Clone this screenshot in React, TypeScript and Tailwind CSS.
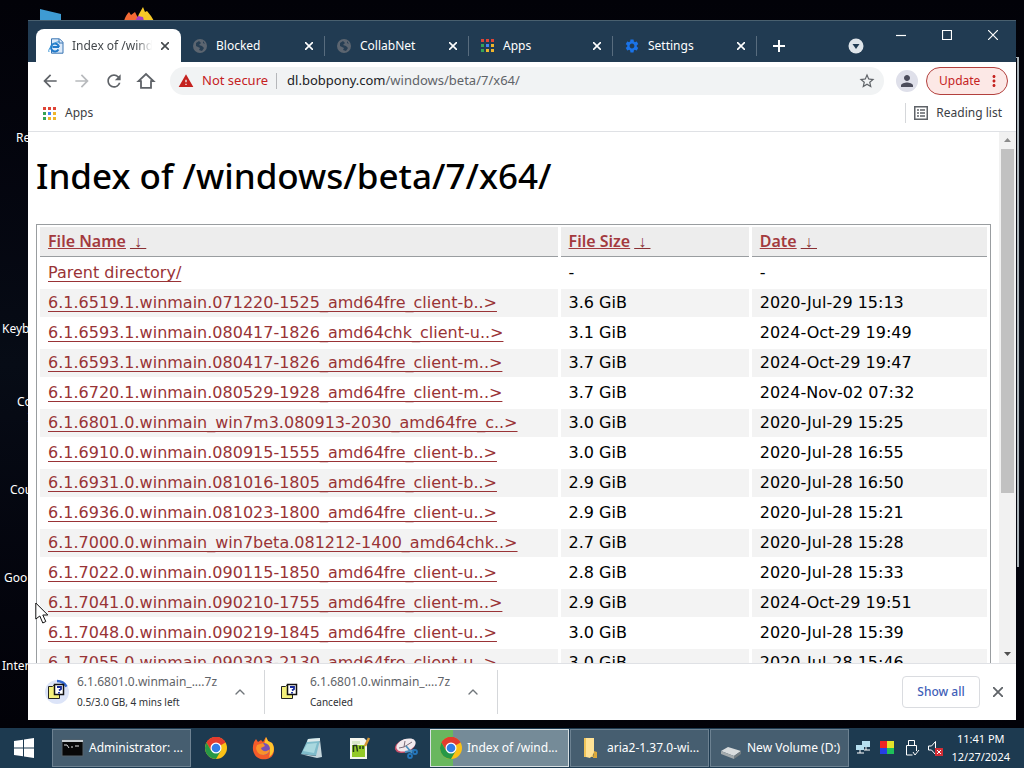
import { ChevronUp } from "lucide-react";
import { MdArrowBack, MdArrowForward, MdMoreVert, MdPerson, MdRefresh, MdSettings, MdStarBorder, MdWarning } from "react-icons/md";
import type { ReactNode } from "react";

const files = [
  ["6.1.6519.1.winmain.071220-1525_amd64fre_client-b..>", "3.6 GiB", "2020-Jul-29 15:13"],
  ["6.1.6593.1.winmain.080417-1826_amd64chk_client-u..>", "3.1 GiB", "2024-Oct-29 19:49"],
  ["6.1.6593.1.winmain.080417-1826_amd64fre_client-m..>", "3.7 GiB", "2024-Oct-29 19:47"],
  ["6.1.6720.1.winmain.080529-1928_amd64fre_client-m..>", "3.7 GiB", "2024-Nov-02 07:32"],
  ["6.1.6801.0.winmain_win7m3.080913-2030_amd64fre_c..>", "3.0 GiB", "2020-Jul-29 15:25"],
  ["6.1.6910.0.winmain.080915-1555_amd64fre_client-b..>", "3.0 GiB", "2020-Jul-28 16:55"],
  ["6.1.6931.0.winmain.081016-1805_amd64fre_client-b..>", "2.9 GiB", "2020-Jul-28 16:50"],
  ["6.1.6936.0.winmain.081023-1800_amd64fre_client-u..>", "2.9 GiB", "2020-Jul-28 15:21"],
  ["6.1.7000.0.winmain_win7beta.081212-1400_amd64chk..>", "2.7 GiB", "2020-Jul-28 15:28"],
  ["6.1.7022.0.winmain.090115-1850_amd64fre_client-u..>", "2.8 GiB", "2020-Jul-28 15:33"],
  ["6.1.7041.0.winmain.090210-1755_amd64fre_client-m..>", "2.9 GiB", "2024-Oct-29 19:51"],
  ["6.1.7048.0.winmain.090219-1845_amd64fre_client-u..>", "3.0 GiB", "2020-Jul-28 15:39"],
  ["6.1.7055.0.winmain.090303-2130_amd64fre_client-u..>", "3.0 GiB", "2020-Jul-28 15:46"]
];

const tabs = [
  { label: "Blocked", icon: <GlobeIcon /> },
  { label: "CollabNet", icon: <GlobeIcon /> },
  { label: "Apps", icon: <AppsGrid /> },
  { label: "Settings", icon: <MdSettings size={16} className="text-[#1a73e8]" /> }
];

export default function App() {
  return (
    <div className="flex h-screen flex-col overflow-hidden bg-[#020208] font-['Noto_Sans','Open_Sans',sans-serif] text-[12px]">
      <main className="relative min-h-0 flex-1 bg-linear-to-b from-[#020208] via-[#070c16] to-[#020208]">
        <DesktopIcons />
        <div className="absolute top-[57px] right-[5px] h-[510px] w-3 border-t border-r-2 border-[#aab3b8]" />
        <BrowserWindow />
        <Cursor />
      </main>
      <Taskbar />
    </div>
  );
}

function DesktopIcons() {
  return (
    <div className="leading-4 text-white">
      <svg className="absolute top-2 left-10" width="22" height="14" viewBox="0 0 22 14" aria-hidden="true">
        <path d="M0 1l21 5v8H0z" fill="#3e9bd3" />
      </svg>
      <svg className="absolute top-[6px] left-[124px]" width="30" height="15" viewBox="0 0 30 15" aria-hidden="true">
        <path d="M0 15C1 11 3 8 5 6l2 3 4-3 2 4 3 5z" fill="#f36a35" />
        <path d="M12 15l3-7 4-7 2 5 2-1 4 5 3 5z" fill="#f7c928" />
        <path d="M11 15l3-5 5 1 1 4z" fill="#a43fc4" />
      </svg>
      <span className="absolute top-[130px] left-4">Re</span>
      <span className="absolute top-[321px] left-[2px]">Keyb</span>
      <span className="absolute top-[394px] left-[17px] text-right">
        Co
        <br />I
      </span>
      <span className="absolute top-[482px] left-[10px]">Cou</span>
      <span className="absolute top-[570px] left-1">Goo</span>
      <span className="absolute top-[658px] left-[2px]">Inter</span>
    </div>
  );
}

function BrowserWindow() {
  return (
    <section className="absolute top-5 right-2 bottom-2 left-7 flex flex-col border-t border-[#49606f] bg-white">
      <TabStrip />
      <Toolbar />
      <div className="flex h-8 shrink-0 items-start border-b border-[#dfe1e5] px-[14px] pt-[3px] text-[#3c4043]">
        <a href="#apps" className="flex h-5 items-center gap-2">
          <AppsGrid />
          Apps
        </a>
        <button type="button" className="ml-auto flex h-5 items-center gap-2 border-l border-[#d5d7da] pl-2">
          <ReadingListIcon />
          Reading list
        </button>
      </div>
      <div className="flex min-h-0 flex-1">
        <DirectoryPage />
        <Scrollbar />
      </div>
      <DownloadShelf />
    </section>
  );
}

function TabStrip() {
  return (
    <header className="flex h-[41px] shrink-0 bg-[#213b52] text-white">
      <div className="flex min-w-0 flex-1 pt-2 pl-2">
        <div className="flex h-[33px] w-[145px] shrink-0 items-center rounded-t-lg bg-white pr-2 pl-3 text-[#45494d]">
          <PageIcon />
          <span className="ml-2 w-20 overflow-hidden mask-r-from-80% whitespace-nowrap">Index of /wind</span>
          <CloseButton label="Close Index of /windows" />
        </div>
        {tabs.map((tab) => (
          <div key={tab.label} className="flex h-[33px] w-36 items-center">
            <div className="flex h-5 w-full items-center border-r border-[#586c7e] pr-[7px] pl-[11px]">
              {tab.icon}
              <span className="ml-2">{tab.label}</span>
              <CloseButton label={`Close ${tab.label}`} />
            </div>
          </div>
        ))}
        <button type="button" aria-label="New tab" className="ml-3 grid h-[33px] w-5 place-items-center">
          <svg width="12" height="12" viewBox="0 0 12 12" stroke="currentColor" strokeWidth="2" aria-hidden="true">
            <path d="M6 0v12M0 6h12" />
          </svg>
        </button>
      </div>
      <button type="button" aria-label="Search tabs" className="mt-[17px] mr-[14px] h-4 w-4">
        <svg width="16" height="16" viewBox="0 0 16 16" aria-hidden="true">
          <circle cx="8" cy="8" r="7.500" fill="#dfe5ea" />
          <path d="M4.500 6h7L8 11z" fill="#213b52" />
        </svg>
      </button>
      <WindowButton label="Minimize">
        <path d="M0 5.500h10" />
      </WindowButton>
      <WindowButton label="Maximize">
        <path d="M.5.500h9v9h-9z" />
      </WindowButton>
      <WindowButton label="Close">
        <path d="M0 0l10 10M10 0L0 10" />
      </WindowButton>
    </header>
  );
}

function WindowButton({ label, children }: { label: string; children: ReactNode }) {
  return (
    <button type="button" aria-label={label} className="grid h-7 w-[46px] shrink-0 place-items-center">
      <svg width="10" height="10" viewBox="0 0 10 10" fill="none" stroke="white" strokeWidth="1.200" aria-hidden="true">
        {children}
      </svg>
    </button>
  );
}

function CloseButton({ label }: { label: string }) {
  return (
    <button type="button" aria-label={label} className="ml-auto grid h-4 w-4 shrink-0 place-items-center">
      <svg width="8" height="8" viewBox="0 0 8 8" stroke="currentColor" strokeWidth="1.600" aria-hidden="true">
        <path d="M0 0l8 8M8 0L0 8" />
      </svg>
    </button>
  );
}

function Toolbar() {
  return (
    <div className="flex h-[38px] shrink-0 items-center pr-2 pl-3 text-[#5f6368]">
      <nav className="flex gap-3">
        <button type="button" aria-label="Back">
          <MdArrowBack size={20} />
        </button>
        <button type="button" aria-label="Forward" className="text-[#b8babd]">
          <MdArrowForward size={20} />
        </button>
        <button type="button" aria-label="Reload">
          <MdRefresh size={20} />
        </button>
        <button type="button" aria-label="Home">
          <svg width="20" height="20" viewBox="0 0 20 20" fill="none" stroke="currentColor" strokeWidth="1.800" aria-hidden="true">
            <path d="M2.500 10.200L10 3l7.500 7.200H15v6.600H5v-6.600z" />
          </svg>
        </button>
      </nav>
      <div className="ml-[14px] flex h-7 min-w-0 flex-1 items-center rounded-full bg-[#f1f3f4] px-2 text-[13px]">
        <MdWarning size={16} className="shrink-0 text-[#c5221f]" />
        <span className="ml-2 shrink-0 text-[#c5221f]">Not secure</span>
        <span className="mr-[10px] ml-2 h-4 w-px bg-[#b5b7ba]" />
        <span className="min-w-0 flex-1 truncate">
          <span className="text-[#202124]">dl.bobpony.com</span>/windows/beta/7/x64/
        </span>
        <button type="button" aria-label="Bookmark this page">
          <MdStarBorder size={18} />
        </button>
      </div>
      <button type="button" aria-label="Profile" className="ml-3 grid h-[22px] w-[22px] place-items-center rounded-full bg-[#dfe0ea]">
        <MdPerson size={18} className="text-[#4c4d5c]" />
      </button>
      <button type="button" className="ml-2 flex h-7 w-[82px] items-center justify-between rounded-full border border-[#b3403d] bg-[#fce8e6] pr-1 pl-3 text-[#c5221f]">
        Update
        <MdMoreVert size={18} />
      </button>
    </div>
  );
}

function DirectoryPage() {
  return (
    <div className="min-w-0 flex-1 overflow-hidden px-2 text-black">
      <h1 className="mt-5 mb-6 text-[35px] leading-[48px] font-medium whitespace-nowrap">Index of /windows/beta/7/x64/</h1>
      <table className="w-full table-fixed border-separate border-spacing-x-[3px] border-spacing-y-[2px] border border-[#999da0] text-left text-[16px] leading-7">
        <thead>
          <tr>
            <HeaderCell width="w-[55%]">File Name</HeaderCell>
            <HeaderCell width="w-[20%]">File Size</HeaderCell>
            <HeaderCell width="w-[25%]">Date</HeaderCell>
          </tr>
        </thead>
        <tbody className="font-['DejaVu_Sans',sans-serif]">
          <FileRow name="Parent directory/" size="-" date="-" />
          {files.map(([name, size, date]) => (
            <FileRow key={name} name={name} size={size} date={date} />
          ))}
        </tbody>
      </table>
    </div>
  );
}

function HeaderCell({ width, children }: { width: string; children: ReactNode }) {
  return (
    <th className={`${width} border-b border-[#999da0] bg-[#ededed] px-2 pt-0 pb-px font-semibold`}>
      <a href="#sort" className="text-[#a33a3e] underline">
        {children}
      </a>
      <a href="#descending" className="ml-1 font-normal text-[#8a3034] underline">
        &nbsp;↓&nbsp;
      </a>
    </th>
  );
}

function FileRow({ name, size, date }: { name: string; size: string; date: string }) {
  return (
    <tr className="[&:nth-child(even)>td]:bg-[#f3f3f3]">
      <td className="px-2 py-0 whitespace-nowrap">
        <a href="#file" className="text-[#993336] underline underline-offset-3 [text-decoration-skip-ink:none]">
          {name}
        </a>
      </td>
      <td className="px-2 py-0">{size}</td>
      <td className="px-2 py-0 whitespace-nowrap">{date}</td>
    </tr>
  );
}

function Scrollbar() {
  return (
    <div className="flex w-[17px] shrink-0 flex-col items-center bg-[#f1f1f1]">
      <svg width="17" height="17" viewBox="0 0 17 17" aria-hidden="true">
        <path d="M5 10l3.500-4L12 10z" fill="#8a8a8a" />
      </svg>
      <div className="h-[344px] w-[13px] bg-[#c1c1c1]" />
      <svg className="mt-auto" width="17" height="17" viewBox="0 0 17 17" aria-hidden="true">
        <path d="M5 6l3.500 4L12 6z" fill="#505050" />
      </svg>
    </div>
  );
}

function DownloadShelf() {
  return (
    <footer className="flex h-[57px] shrink-0 items-center border-t border-[#dfe1e5] pr-[10px]">
      <Download status="0.5/3.0 GB, 4 mins left" active />
      <Download status="Canceled" />
      <button type="button" className="ml-auto h-8 w-[78px] rounded border border-[#dadce0] font-medium text-[#3f61b8]">
        Show all
      </button>
      <button type="button" aria-label="Close downloads bar" className="ml-[10px] grid h-4 w-4 place-items-center text-[#5f6368]">
        <svg width="10" height="10" viewBox="0 0 10 10" stroke="currentColor" strokeWidth="1.800" aria-hidden="true">
          <path d="M0 0l10 10M10 0L0 10" />
        </svg>
      </button>
    </footer>
  );
}

function Download({ status, active = false }: { status: string; active?: boolean }) {
  return (
    <div className={`flex h-11 shrink-0 items-center border-r border-[#d5d7da] pr-4 ${active ? "w-[237px] pl-4" : "w-[233px] pl-3"}`}>
      <svg width="26" height="26" viewBox="0 0 26 26" aria-hidden="true">
        {active ? (
          <>
            <circle cx="13" cy="13" r="12" fill="#dce4f8" />
            <path d="M13 2a11 11 0 0 1 9.500 5.500" fill="none" stroke="#3468cf" strokeWidth="2.500" />
          </>
        ) : null}
        <path d="M4.500 7.500h4l1-1h6v13h-11z" fill="#f4f07c" stroke="#222" />
        <path d="M10.500 5.500h9v10h-9z" fill="#fff" stroke="#111" strokeWidth="1.500" />
        <path d="M13 8h4v2l-2 1.500M15 13v1.500" fill="none" stroke="#172b9a" strokeWidth="1.800" />
      </svg>
      <div className="ml-[7px] min-w-0 flex-1 whitespace-nowrap">
        <p className="leading-5 text-[#5f6368]">6.1.6801.0.winmain_....7z</p>
        <p className="text-[10px] leading-5 text-[#303236]">{status}</p>
      </div>
      <button type="button" aria-label="Download options" className="text-[#70757a]">
        <ChevronUp size={16} />
      </button>
    </div>
  );
}

function Taskbar() {
  return (
    <footer className="flex h-10 shrink-0 items-stretch bg-[#1d3a50] text-white">
      <button type="button" aria-label="Start" className="grid w-[52px] shrink-0 place-items-center pr-1">
        <svg width="20" height="20" viewBox="0 0 20 20" fill="white" aria-hidden="true">
          <path d="M0 3l9-1.300v7.800H0zM10 1.500L20 0v9.500H10zM0 10.500h9v7.800L0 17zM10 10.500h10V20l-10-1.500z" />
        </svg>
      </button>
      <TaskButton label="Administrator: ..." icon={<TerminalIcon />} />
      <div className="flex w-[238px] shrink-0 items-center justify-between px-3">
        <button type="button" aria-label="Chrome"><ChromeIcon /></button>
        <button type="button" aria-label="Firefox"><FirefoxIcon /></button>
        <button type="button" aria-label="Notepad"><NotepadIcon /></button>
        <button type="button" aria-label="Notepad++"><NotepadPlusIcon /></button>
        <button type="button" aria-label="Snipping Tool"><SnipIcon /></button>
      </div>
      <TaskButton label="Index of /wind..." icon={<ChromeIcon />} active />
      <TaskButton label="aria2-1.37.0-wi..." icon={<FolderIcon />} />
      <TaskButton label="New Volume (D:)" icon={<DriveIcon />} />
      <div className="ml-auto flex shrink-0 items-center gap-2 pr-[14px]">
        <TrayIcons />
        <time className="text-center text-[11px] leading-[18px]">
          11:41 PM
          <br />
          12/27/2024
        </time>
      </div>
    </footer>
  );
}

function TaskButton({ label, icon, active = false }: { label: string; icon: ReactNode; active?: boolean }) {
  return (
    <button
      type="button"
      className={`mr-px flex h-[38px] w-[139px] shrink-0 items-center gap-1 self-center border px-2 whitespace-nowrap ${
        active
          ? "border-[#d7dfe2] bg-linear-to-r from-[#69b75e] from-16% to-[#758b98] to-16%"
          : "border-[#6d8292] bg-[#465e70]"
      }`}
    >
      {icon}
      {label}
    </button>
  );
}

function AppsGrid() {
  return (
    <svg width="15" height="15" viewBox="0 0 15 15" aria-hidden="true">
      <path d="M1 1h3v3H1zM6 1h3v3H6zM11 1h3v3h-3z" fill="#df4436" />
      <path d="M1 6h3v3H1z" fill="#35a355" />
      <path d="M6 6h3v3H6z" fill="#4285f4" />
      <path d="M11 6h3v3h-3zM6 11h3v3H6zM11 11h3v3h-3z" fill="#efb52b" />
      <path d="M1 11h3v3H1z" fill="#35a355" />
    </svg>
  );
}

function GlobeIcon() {
  return (
    <svg width="16" height="16" viewBox="0 0 16 16" aria-hidden="true">
      <circle cx="8" cy="8" r="7" fill="#5c6570" />
      <path d="M4 5l3-2 2 2-2 2 3 1 2 2-2 3-3-1 1-2-4-2zM11 3l2 3-2-1z" fill="#273e53" />
    </svg>
  );
}

function PageIcon() {
  return (
    <svg width="16" height="16" viewBox="0 0 16 16" fill="none" aria-hidden="true">
      <path d="M3.500.800h8l3.500 3.500v10.900H3.500z" fill="#dceafa" stroke="#3975b3" />
      <path d="M11 1v4h4" stroke="#3975b3" />
      <path d="M11 9H4.500M10.500 11.500A4 4 0 1 1 11 9" stroke="#2179c8" strokeWidth="2" />
      <path d="M1 14C-1 11 8 2 12 4" stroke="#3693d5" />
    </svg>
  );
}

function ReadingListIcon() {
  return (
    <svg width="14" height="14" viewBox="0 0 14 14" fill="none" stroke="#5f6368" strokeWidth="1.500" aria-hidden="true">
      <path d="M.75.750h12.500v12.500H.75zM3 4h2M6 4h5M3 7h2M6 7h5M3 10h2M6 10h5" />
    </svg>
  );
}

function TerminalIcon() {
  return (
    <svg className="shrink-0" width="24" height="20" viewBox="0 0 24 20" aria-hidden="true">
      <path d="M1 2h21v16H1z" fill="#080808" stroke="#56636b" />
      <path d="M1 2h21v2H1z" fill="#c9ced1" />
      <path d="M3 7h3l2 3M10 9h2M14 8h4" fill="none" stroke="#dedede" />
    </svg>
  );
}

function ChromeIcon() {
  return (
    <svg className="shrink-0" width="24" height="24" viewBox="0 0 24 24" aria-hidden="true">
      <circle cx="12" cy="12" r="11" fill="#fbc116" />
      <path d="M12 12L2.500 6.500A11 11 0 0 1 21.500 6.500z" fill="#e33b2e" />
      <path d="M12 6.500h9.500A11 11 0 0 0 2.500 6.500L7.200 14.700z" fill="#e33b2e" />
      <path d="M2.500 6.500A11 11 0 0 0 12 23l4.800-8.300H7.200z" fill="#279847" />
      <circle cx="12" cy="12" r="5.500" fill="white" />
      <circle cx="12" cy="12" r="4.300" fill="#337de6" />
    </svg>
  );
}

function FirefoxIcon() {
  return (
    <svg width="24" height="24" viewBox="0 0 24 24" aria-hidden="true">
      <path d="M2 6l2-3 2 3 3-2 2 2 3-5 2 4 4 2c4 6 2 15-5 16C5 25-2 17 2 6z" fill="#f45b2a" />
      <path d="M14 1l2 4 4 2c4 6 1 12-3 14 3-7-2-9-5-12z" fill="#ffc52d" />
      <circle cx="12" cy="13" r="6" fill="#7750b7" />
      <path d="M5 9l6-2 2 3-4 2c1 4 6 4 9 1-1 8-13 8-14-1z" fill="#f9922b" />
    </svg>
  );
}

function NotepadIcon() {
  return (
    <svg width="24" height="24" viewBox="0 0 24 24" aria-hidden="true">
      <path d="M9 3l12-1-2 18-17-2z" fill="#7fbccb" />
      <path d="M9 3l12-1v3L8 6z" fill="#dce9ea" />
      <path d="M8 8l10-1-3 10-11-2z" fill="#a9d8df" />
      <path d="M1 18l16 2 4-16 2 17-5 1z" fill="#c5d6dc" />
    </svg>
  );
}

function NotepadPlusIcon() {
  return (
    <svg width="24" height="24" viewBox="0 0 24 24" aria-hidden="true">
      <path d="M3 2h14l3 3v18H3z" fill="#f5f6ee" />
      <path d="M5 9h13v12H5z" fill="#93ca28" />
      <path d="M5 5h8v3H5z" fill="#d7e7c7" />
      <path d="M6.500 9v7M6.500 9.500h3l1 6M13 10v3M16 10v3" fill="none" stroke="#22361b" strokeWidth="1.500" />
      <path d="M22 2l-4 8" stroke="#d59734" strokeWidth="2.500" />
    </svg>
  );
}

function SnipIcon() {
  return (
    <svg width="24" height="24" viewBox="0 0 24 24" aria-hidden="true">
      <ellipse cx="11" cy="10" rx="10.500" ry="6.500" fill="#c9506a" transform="rotate(-20 11 10)" />
      <ellipse cx="12" cy="9" rx="10" ry="6" fill="#f1e9ed" transform="rotate(-20 12 9)" />
      <path d="M5 12l5-1 8-5M10 11l1-6" fill="none" stroke="#7c6c79" />
      <path d="M12 10l6 7M11 16l10-2" stroke="#4c91c2" strokeWidth="1.800" />
      <circle cx="16" cy="20" r="2" fill="none" stroke="#2475ba" strokeWidth="1.800" />
      <circle cx="21" cy="16" r="2" fill="none" stroke="#2475ba" strokeWidth="1.800" />
    </svg>
  );
}

function FolderIcon() {
  return (
    <svg className="shrink-0" width="24" height="24" viewBox="0 0 24 24" aria-hidden="true">
      <path d="M5 2h9v19H5z" fill="#efc45b" />
      <path d="M7 2h8v15l-4 5-4-1z" fill="#ffe296" />
      <path d="M15 15l3 1v6h-4z" fill="#dca83a" />
    </svg>
  );
}

function DriveIcon() {
  return (
    <svg className="shrink-0" width="24" height="24" viewBox="0 0 24 24" aria-hidden="true">
      <path d="M2 15l7-4 13 4-7 5z" fill="#d8dcdd" />
      <path d="M2 15v3l13 5v-3z" fill="#a4aaac" />
      <path d="M15 20l7-5v3l-7 5z" fill="#737d82" />
    </svg>
  );
}

function TrayIcons() {
  return (
    <svg width="88" height="18" viewBox="0 0 88 18" fill="none" aria-label="System tray" role="img">
      <path d="M1 6h8v5H1zM7 2h8v6H7z" fill="#b6dff0" />
      <path d="M5 11v3M2 14h7M11 8v3M9 11h6" stroke="white" />
      <path d="M25 2h7v7h-7z" fill="#ed2424" />
      <path d="M32 2h7v7h-7z" fill="#e4e32a" />
      <path d="M25 9h7v6h-7z" fill="#263ee5" />
      <path d="M32 9h7v6h-7z" fill="#1fc05a" />
      <path d="M53.500 6V1.500h6V6M51.500 6.500h10V12M51.500 6.500v9.500h6M58 13l2 3 4-5" stroke="white" />
      <path d="M73.500 7h3l4-4.500v13l-4-4.500h-3z" stroke="white" />
      <path d="M80 9h8v8h-8z" fill="#d32d35" />
      <path d="M82 11l4 4M86 11l-4 4" stroke="white" />
    </svg>
  );
}

function Cursor() {
  return (
    <svg className="absolute top-[602px] left-[35px]" width="13" height="22" viewBox="0 0 13 22" aria-hidden="true">
      <path d="M.800 1v16l4-3 3 7 3-1.500-3-6.500h5z" fill="white" stroke="#111" />
    </svg>
  );
}
